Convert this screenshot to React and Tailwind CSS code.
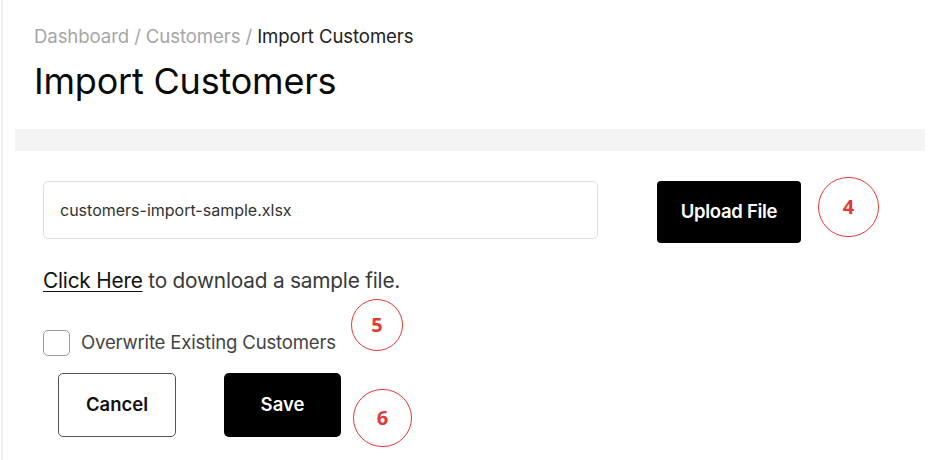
import React from "react";

function Mark({ n, className }) {
  return (
    <div
      className={`absolute rounded-full border-[1.5px] border-[#e53935] flex items-center justify-center text-[#e53935] font-bold text-[20px] ${className}`}
      style={{ fontFamily: "'Open Sans', sans-serif" }}
    >
      {n}
    </div>
  );
}

export default function App() {
  return (
    <div
      className="relative w-[931px] h-[460px] bg-white overflow-hidden"
      style={{ fontFamily: "Inter, 'Noto Sans', sans-serif" }}
    >
      <div className="absolute left-[1px] top-0 bottom-0 w-[2px] bg-[#f0f0f0]" />
      <div className="pl-[34px] pt-[24px]">
        <div className="text-[18.6px] leading-[24px] tracking-[-0.1px] whitespace-nowrap">
          <span className="text-[#a6a6a6]">Dashboard / Customers / </span>
          <span className="text-[#222]">Import Customers</span>
        </div>
        <h1 className="mt-[11px] text-[36px] leading-[44px] text-[#0a0a0a] font-normal tracking-[-0.2px] whitespace-nowrap">
          Import Customers
        </h1>
      </div>
      <div className="ml-[15px] mr-[6px] mt-[26px] h-[22px] bg-[#f4f4f4]" />
      <div className="pl-[43px] pt-[30px]">
        <div className="flex items-start">
          <div className="w-[555px] h-[58px] border border-[#dedede] rounded-[5px] flex items-center pl-[16px] text-[16px] text-[#333] whitespace-nowrap">
            customers-import-sample.xlsx
          </div>
          <button className="ml-[59px] w-[144px] h-[62px] bg-black text-white rounded-[4px] text-[18.5px] font-semibold tracking-[-0.3px]">
            Upload File
          </button>
        </div>
        <div className="mt-[24px] text-[20.8px] leading-[28px] text-[#3a3a3a] tracking-[-0.2px] whitespace-nowrap">
          <span className="underline text-[#111] underline-offset-[3px] decoration-[1px]">Click Here</span> to download a sample file.
        </div>
        <div className="mt-[35px] flex items-center h-[26px]">
          <div className="w-[27px] h-[26px] border border-[#9a9a9a] rounded-[5px]" />
          <span className="ml-[11px] text-[18.6px] text-[#444] tracking-[-0.2px] whitespace-nowrap">Overwrite Existing Customers</span>
        </div>
        <div className="mt-[17px] ml-[15px] flex gap-[48px]">
          <button className="w-[118px] h-[64px] border border-[#555] rounded-[5px] text-[18.5px] font-semibold text-[#111] bg-white">
            Cancel
          </button>
          <button className="w-[117px] h-[64px] bg-black text-white rounded-[5px] text-[18.5px] font-semibold">
            Save
          </button>
        </div>
      </div>
      <Mark n="4" className="left-[818px] top-[177px] w-[61px] h-[60px]" />
      <Mark n="5" className="left-[351px] top-[299px] w-[52px] h-[52px]" />
      <Mark n="6" className="left-[353px] top-[389px] w-[59px] h-[58px]" />
    </div>
  );
}
